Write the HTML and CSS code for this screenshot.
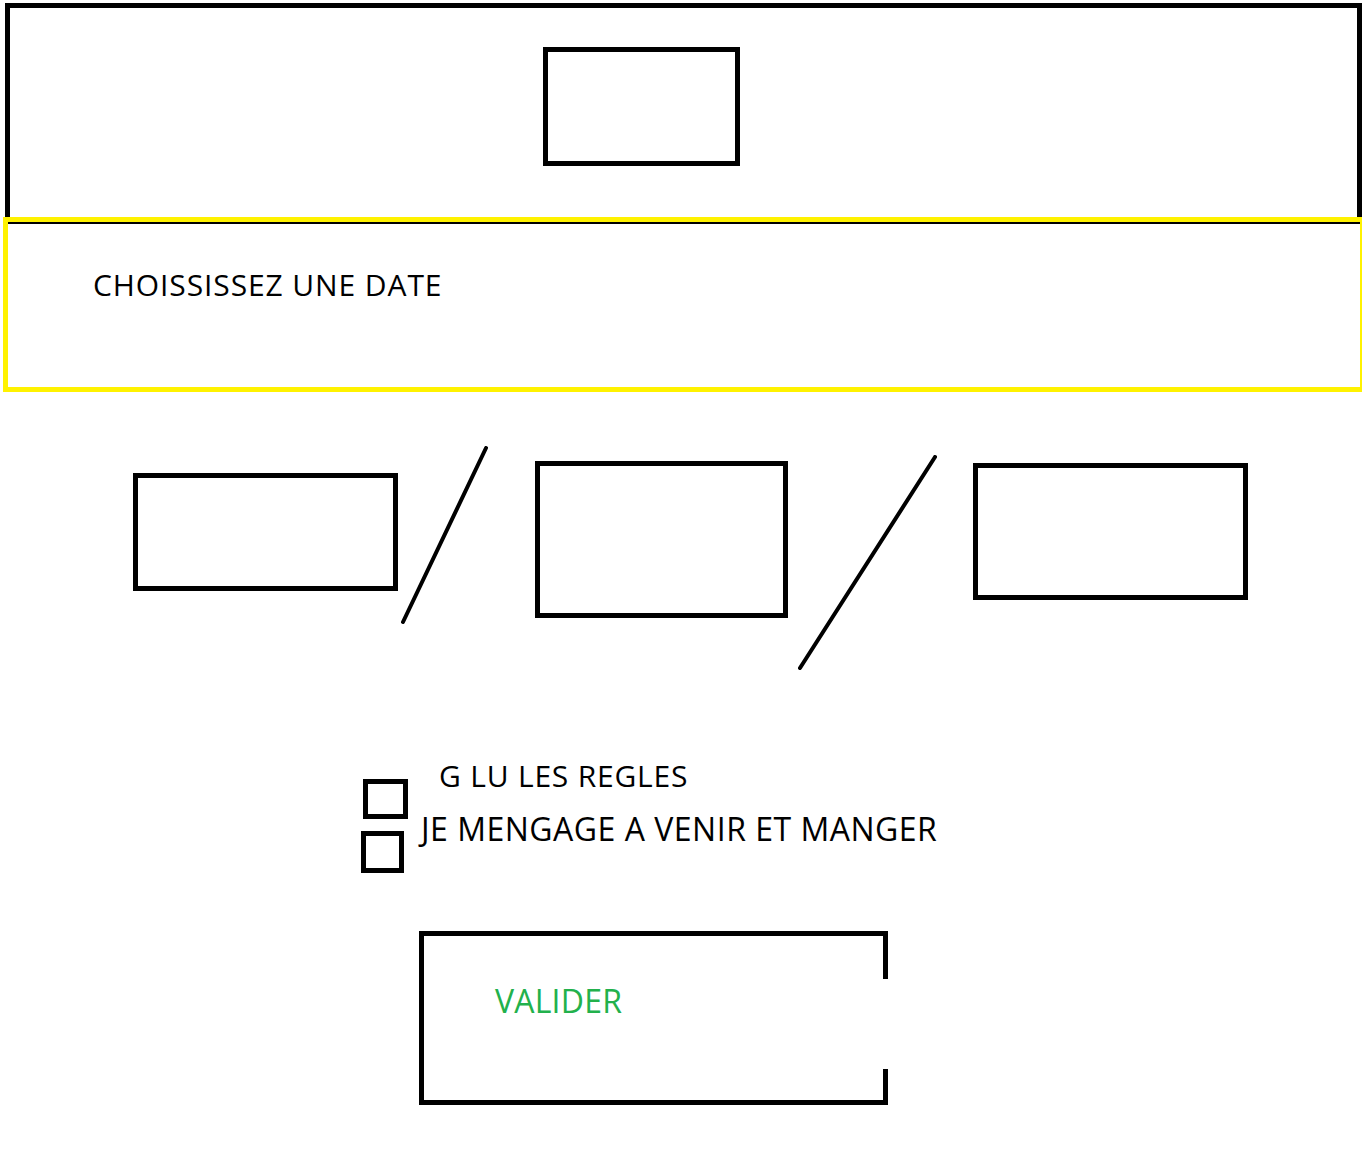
FILE: index.html
```html
<!DOCTYPE html>
<html lang="fr">
<head>
<meta charset="utf-8">
<title>Réservation</title>
<link rel="stylesheet" href="styles.css">
</head>
<body>
  <header class="header">
    <div class="logo"></div>
  </header>

  <section class="date-panel">
    <p class="date-title">CHOISSISSEZ UNE DATE</p>
  </section>

  <div class="date-row">
    <div class="field field-day"></div>
    <svg class="slash slash-1" width="87" height="178" viewBox="0 0 87 178"><line x1="85" y1="2" x2="2" y2="176" stroke="#000" stroke-width="4" stroke-linecap="round"/></svg>
    <div class="field field-month"></div>
    <svg class="slash slash-2" width="139" height="215" viewBox="0 0 139 215"><line x1="137" y1="2" x2="2" y2="213" stroke="#000" stroke-width="4" stroke-linecap="round"/></svg>
    <div class="field field-year"></div>
  </div>

  <div class="checks">
    <div class="boxes">
      <div class="box box-1"></div>
      <div class="box box-2"></div>
    </div>
    <div class="labels">
      <p class="label label-1">G LU LES REGLES</p>
      <p class="label label-2">JE MENGAGE A VENIR ET MANGER</p>
    </div>
  </div>

  <div class="validate">
    <span class="validate-text">VALIDER</span>
  </div>
</body>
</html>
```

FILE: styles.css
```css
* { box-sizing: border-box; }

html, body {
  margin: 0;
  padding: 0;
  background: #fff;
  overflow: hidden;
}

body {
  font-family: "Open Sans", "Noto Sans", sans-serif;
  color: #000;
  height: 1152px;
}

p { margin: 0; }

.header {
  margin: 3px 0 0 5px;
  width: 1357px;
  height: 214px;
  border: 5px solid #000;
  border-bottom: 0;
  padding-top: 39px;
}

.logo {
  margin-left: 533px;
  width: 197px;
  height: 119px;
  border: 5px solid #000;
}

.date-panel {
  margin-left: 3px;
  width: 1359px;
  height: 175px;
  border: 5px solid #fff200;
  border-right-width: 2px;
  box-shadow: inset 0 2px 0 #000;
  padding: 48px 0 0 85px;
}

.date-title {
  font-size: 30px;
  line-height: 30px;
  letter-spacing: 0.9px;
  white-space: nowrap;
}

.date-row {
  display: flex;
  align-items: flex-start;
  margin-top: 54px;
  padding-left: 133px;
  height: 224px;
}

.field {
  border: 5px solid #000;
  flex: none;
}

.field-day {
  width: 265px;
  height: 118px;
  margin-top: 27px;
}

.slash { flex: none; display: block; }

.slash-1 { margin-left: 3px; }

.field-month {
  width: 253px;
  height: 157px;
  margin-top: 15px;
  margin-left: 47px;
}

.slash-2 {
  margin-left: 10px;
  margin-top: 9px;
}

.field-year {
  width: 275px;
  height: 137px;
  margin-top: 17px;
  margin-left: 36px;
}

.checks {
  display: flex;
  margin-top: 91px;
  margin-left: 361px;
  height: 112px;
}

.boxes {
  display: flex;
  flex-direction: column;
  width: 58px;
}

.box {
  border: 5px solid #000;
}

.box-1 {
  width: 45px;
  height: 40px;
  margin-top: 18px;
  margin-left: 2px;
}

.box-2 {
  width: 43px;
  height: 42px;
  margin-top: 12px;
}

.labels {
  display: flex;
  flex-direction: column;
}

.label {
  white-space: nowrap;
}

.label-1 {
  margin-left: 20px;
  font-size: 30px;
  line-height: 30px;
  letter-spacing: 0.8px;
}

.label-2 {
  margin-top: 22px;
  margin-left: 2px;
  font-size: 32px;
  line-height: 32px;
  letter-spacing: 0.5px;
}

.validate {
  margin-top: 58px;
  margin-left: 419px;
  width: 469px;
  height: 174px;
  border: 5px solid #000;
  border-right: 0;
  padding: 49px 0 0 71px;
  background:
    linear-gradient(#000, #000) right top / 5px 43px no-repeat,
    linear-gradient(#000, #000) right bottom / 5px 31px no-repeat;
}

.validate-text {
  display: block;
  font-size: 32px;
  line-height: 32px;
  letter-spacing: 0.2px;
  color: #22b14c;
}
```
